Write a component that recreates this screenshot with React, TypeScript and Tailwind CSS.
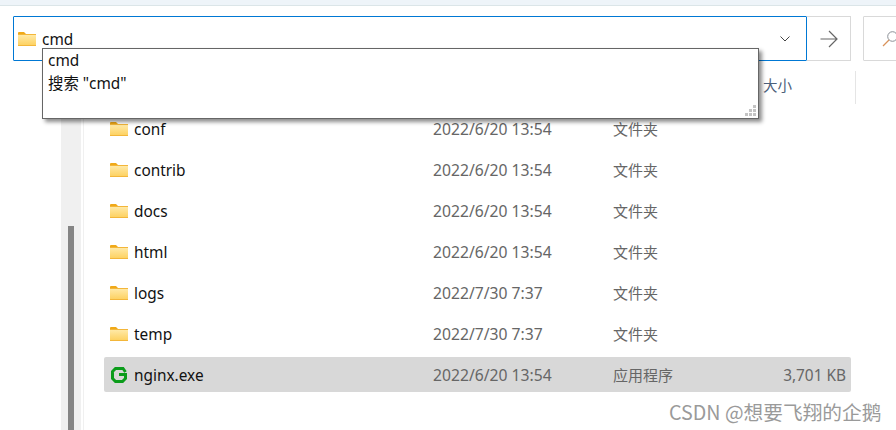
import React from 'react';

const font = { fontFamily: '"Noto Sans", "Noto Sans CJK SC", sans-serif' };

const rows = [
  { name: 'conf', date: '2022/6/20 13:54', type: '文件夹' },
  { name: 'contrib', date: '2022/6/20 13:54', type: '文件夹' },
  { name: 'docs', date: '2022/6/20 13:54', type: '文件夹' },
  { name: 'html', date: '2022/6/20 13:54', type: '文件夹' },
  { name: 'logs', date: '2022/7/30 7:37', type: '文件夹' },
  { name: 'temp', date: '2022/7/30 7:37', type: '文件夹' },
];

const FolderIcon = () => (
  <svg width="18" height="14" viewBox="0 0 18 14" className="shrink-0">
    <defs>
      <linearGradient id="folderFill" x1="0" y1="0" x2="0" y2="1">
        <stop offset="0" stopColor="#ffe9a6" />
        <stop offset="1" stopColor="#fdd263" />
      </linearGradient>
    </defs>
    <path d="M0 1 a1 1 0 0 1 1-1 h5 l2 2 h-8 z" fill="#f0a918" />
    <rect x="0" y="2" width="18" height="12" fill="#f3b63a" />
    <rect x="0" y="3" width="18" height="10" fill="url(#folderFill)" />
  </svg>
);

const NginxIcon = () => (
  <svg width="16" height="16" viewBox="0 0 16 16" className="shrink-0">
    <path
      d="M14.5 5 L12 1.5 H4.5 L1.5 4.5 V11.5 L4.5 14.5 H11.5 L14.5 11.5 V7.5 H8"
      fill="none"
      stroke="#0b9c1b"
      strokeWidth="3"
    />
  </svg>
);

export default function App() {
  return (
    <div className="relative w-[896px] h-[430px] overflow-hidden bg-white text-[15.4px]" style={font}>
      <div className="h-[6px] bg-[#eef4f9] border-b border-[#dbe5e8]" />

      {/* Address row */}
      <div className="flex items-stretch h-[45px] mt-[10px] pl-[13px]">
        <div className="w-[794px] shrink-0 flex items-center pl-[4px] pr-[16px] border border-[#0078d4] rounded-[1px]">
          <FolderIcon />
          <span className="ml-[6px] text-[#111] pt-[2px]">cmd</span>
          <svg width="10" height="6" viewBox="0 0 10 6" className="ml-auto mt-[1px] shrink-0">
            <path d="M0.5 0.5 L5 5 L9.5 0.5" fill="none" stroke="#444" strokeWidth="1" />
          </svg>
        </div>
        <div className="w-[44px] shrink-0 flex items-center justify-center border border-l-0 border-[#d9d9d9]">
          <svg width="18" height="18" viewBox="0 0 18 18">
            <path d="M0.5 9 H17 M9 1 L17 9 L9 17" fill="none" stroke="#666" strokeWidth="1.2" />
          </svg>
        </div>
        <div className="w-[60px] shrink-0 ml-[12px] pl-[18px] flex items-center border border-[#d9d9d9] rounded-[1px]">
          <svg width="16" height="16" viewBox="0 0 16 16" className="shrink-0">
            <circle cx="10.5" cy="5.5" r="4.8" fill="none" stroke="#8a8f96" strokeWidth="1" />
            <path d="M7 9 L1 15" fill="none" stroke="#d9925a" strokeWidth="1.2" />
          </svg>
        </div>
      </div>

      {/* Body */}
      <div className="flex mt-[10px]">
        <div className="w-[61px]" />
        <div className="w-[20px] h-[359px] pl-[7px] bg-[#f0f0f0] flex flex-col justify-end">
          <div className="w-[6px] h-[204px] bg-[#858585]" />
        </div>
        <div className="w-[1px] ml-[2px] h-[359px] bg-[#f0f0f0]" />
        <div className="ml-[20px] w-[752px]">
          <div className="h-[33px] flex">
            <span className="ml-[659px] pt-[4px] text-[14.5px] text-[#4c607a]">大小</span>
            <div className="ml-[63px] w-[1px] h-[33px] bg-[#e5e5e5]" />
          </div>
          <div className="mt-[4px] w-[747px]">
            {rows.map((r) => (
              <div key={r.name} className="h-[41px] flex items-center">
                <div className="w-[6px]" />
                <FolderIcon />
                <span className="ml-[6px] w-[299px] pt-[2px] text-[#111]">{r.name}</span>
                <span className="w-[180px] pt-[2px] text-[15.7px] text-[#666]">{r.date}</span>
                <span className="pt-[2px] text-[15px] text-[#666]">{r.type}</span>
              </div>
            ))}
            <div className="mt-[3px] h-[35px] flex items-center bg-[#d8d8d8] rounded-[2px]">
              <div className="w-[7px]" />
              <NginxIcon />
              <span className="ml-[7px] w-[299px] pt-[2px] text-[#111]">nginx.exe</span>
              <span className="w-[180px] pt-[2px] text-[15.7px] text-[#666]">2022/6/20 13:54</span>
              <span className="pt-[2px] text-[15px] text-[#666]">应用程序</span>
              <span className="ml-auto pr-[5px] pt-[2px] text-[15.4px] text-[#666]">3,701 KB</span>
            </div>
          </div>
        </div>
      </div>

      {/* Autocomplete dropdown */}
      <div className="absolute left-[42px] top-[48px] w-[717px] h-[71px] bg-white border border-[#666] shadow-[3px_3px_4px_rgba(0,0,0,0.45)] pl-[5px] leading-[23px] text-[#111]">
        <div>cmd</div>
        <div>搜索 "cmd"</div>
        <div className="absolute right-[2px] bottom-[2px] grid grid-cols-3 gap-[1px]">
          <i className="w-[3px] h-[3px]" /><i className="w-[3px] h-[3px]" /><i className="w-[3px] h-[3px] bg-[#c4c4c4]" />
          <i className="w-[3px] h-[3px]" /><i className="w-[3px] h-[3px] bg-[#c4c4c4]" /><i className="w-[3px] h-[3px] bg-[#c4c4c4]" />
          <i className="w-[3px] h-[3px] bg-[#c4c4c4]" /><i className="w-[3px] h-[3px] bg-[#c4c4c4]" /><i className="w-[3px] h-[3px] bg-[#c4c4c4]" />
        </div>
      </div>

      {/* Watermark */}
      <div className="absolute left-[669px] top-[399px] text-[19.7px] leading-[26px] text-[#9a9a9a]" style={{ fontFamily: '"Noto Sans CJK SC", sans-serif' }}>
        CSDN @想要飞翔的企鹅
      </div>
    </div>
  );
}
